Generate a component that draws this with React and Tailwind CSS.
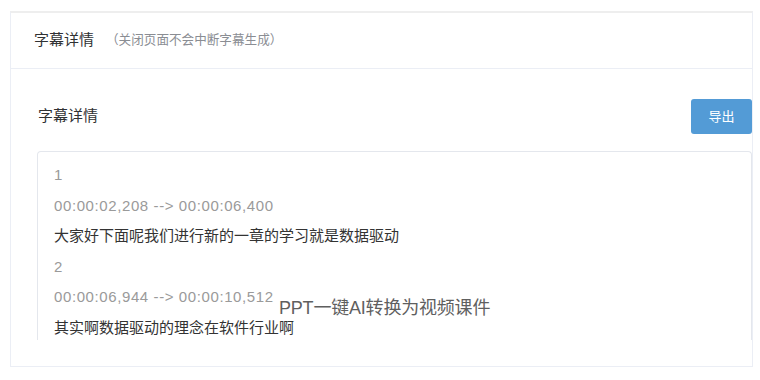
import React from 'react';

const lines = [
  { text: '1', muted: true },
  { text: '00:00:02,208 --> 00:00:06,400', muted: true },
  { text: '大家好下面呢我们进行新的一章的学习就是数据驱动' },
  { text: '2', muted: true },
  { text: '00:00:06,944 --> 00:00:10,512', muted: true },
  { text: '其实啊数据驱动的理念在软件行业啊' },
];

const App = () => {
  return (
    <div
      className="min-h-screen bg-white pt-[11px] pl-[10px] pr-[8px]"
      style={{ fontFamily: '"Liberation Sans", "Noto Sans CJK SC", sans-serif' }}
    >
      <div className="w-[743px] bg-white border border-[#ebeef5] border-t-2 border-t-[#eeeeee]">
        {/* Header */}
        <div className="h-[56px] flex items-center pl-[23px] border-b border-[#ebeef5]">
          <span className="text-[15px] text-[#303133]">字幕详情</span>
          <span className="ml-[12px] text-[12.6px] text-[#8a8d93]">（关闭页面不会中断字幕生成）</span>
        </div>

        {/* Body */}
        <div className="pt-[30px] pl-[26px] pb-[26px]">
          <div className="flex items-center justify-between h-[35px]">
            <span className="ml-[1px] text-[15px] text-[#303133]">字幕详情</span>
            <button className="w-[61px] h-[35px] rounded-[3px] bg-[#539bd6] text-white text-[13px]">
              导出
            </button>
          </div>

          <div className="relative mt-[17px] h-[189px] overflow-hidden rounded-t-[4px] border border-b-0 border-[#e4e7ed]">
            <div className="pt-[8px] pl-[16px]">
              {lines.map((line, i) => (
                <div
                  key={i}
                  className={`h-[30.5px] leading-[30.5px] text-[15px] whitespace-nowrap ${
                    line.muted ? 'text-[#9a9a9a] tracking-[0.6px]' : 'text-[#333333]'
                  }`}
                >
                  {line.text}
                </div>
              ))}
            </div>
            <span className="absolute left-[241px] top-[144px] text-[18px] leading-[24px] text-[#5f5f5f] tracking-[-0.2px] whitespace-nowrap">
              PPT一键AI转换为视频课件
            </span>
          </div>
        </div>
      </div>
    </div>
  );
};

export default App;
